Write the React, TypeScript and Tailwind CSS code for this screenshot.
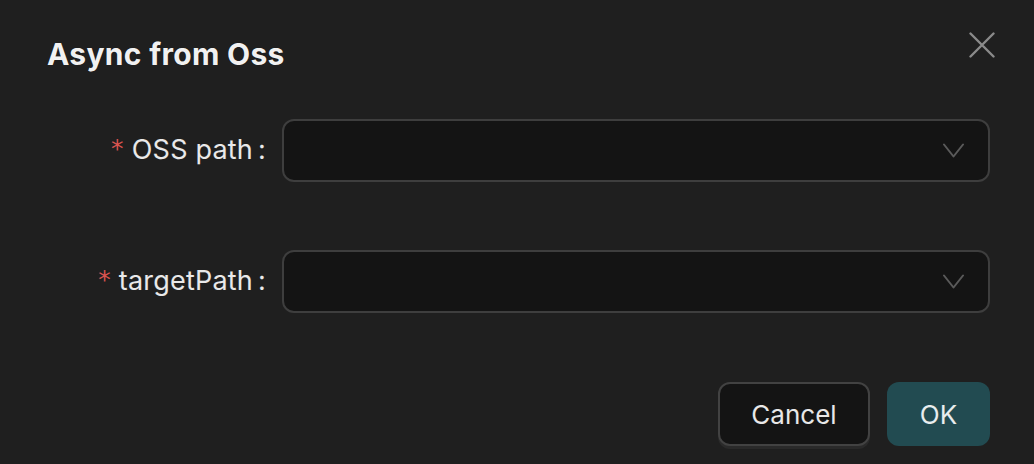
import { useState } from 'react';

interface FieldProps {
    label: string;
}

function Chevron() {
    return (
        <svg width="21" height="15" viewBox="0 0 21 15" fill="none">
            <path d="M1 1.5 L10.5 13.5 L20 1.5" stroke="#5a5a5a" strokeWidth="2" strokeLinecap="round" strokeLinejoin="round" />
        </svg>
    );
}

function SelectField({ label }: FieldProps) {
    return (
        <div className="flex items-center h-[63px]">
            <div className="w-[219px] flex items-center justify-end text-[27px] tracking-[0.2px] text-white/90 shrink-0">
                <span className="text-[#d9534f] mr-[8px] text-[25px] leading-none mt-[-4px] font-['DejaVu_Sans',sans-serif]">*</span>
                <span>{label}</span>
                <span className="ml-[5px]">:</span>
            </div>
            <div className="ml-[16px] flex-1 h-[63px] rounded-[12px] border-2 border-[#3e3e3e] bg-[#141414] flex items-center justify-end pr-[24px]">
                <Chevron />
            </div>
        </div>
    );
}

export default function App() {
    const [open] = useState(true);
    if (!open) return null;

    return (
        <div className="w-[1034px] h-[464px] bg-[#1f1f1f] pl-[47px] pr-[44px] font-['Inter',sans-serif] overflow-hidden">
            <div className="flex items-start justify-between pt-[36px]">
                <h2 className="text-[30px] leading-[36px] font-bold text-white/95 tracking-[0.3px]">
                    Async from Oss
                </h2>
                <button className="w-[32px] h-[32px] -mt-[7px] -mr-[8px] flex items-center justify-center">
                    <svg width="26" height="26" viewBox="0 0 26 26" fill="none">
                        <path d="M1.5 1.5 L24.5 24.5 M24.5 1.5 L1.5 24.5" stroke="#8a8a8a" strokeWidth="2.4" strokeLinecap="round" />
                    </svg>
                </button>
            </div>

            <div className="mt-[47px] flex flex-col gap-[68px]">
                <SelectField label="OSS path" />
                <SelectField label="targetPath" />
            </div>

            <div className="mt-[69px] flex justify-end gap-[17px]">
                <button className="w-[152px] h-[64px] rounded-[12px] border-2 border-[#424242] bg-[#141414] text-[26px] text-white/90 shadow-[0_3px_0_rgba(255,255,255,0.05)]">
                    Cancel
                </button>
                <button className="w-[103px] h-[64px] rounded-[12px] bg-[#224b51] text-[26px] text-white/90">
                    OK
                </button>
            </div>
        </div>
    );
}
